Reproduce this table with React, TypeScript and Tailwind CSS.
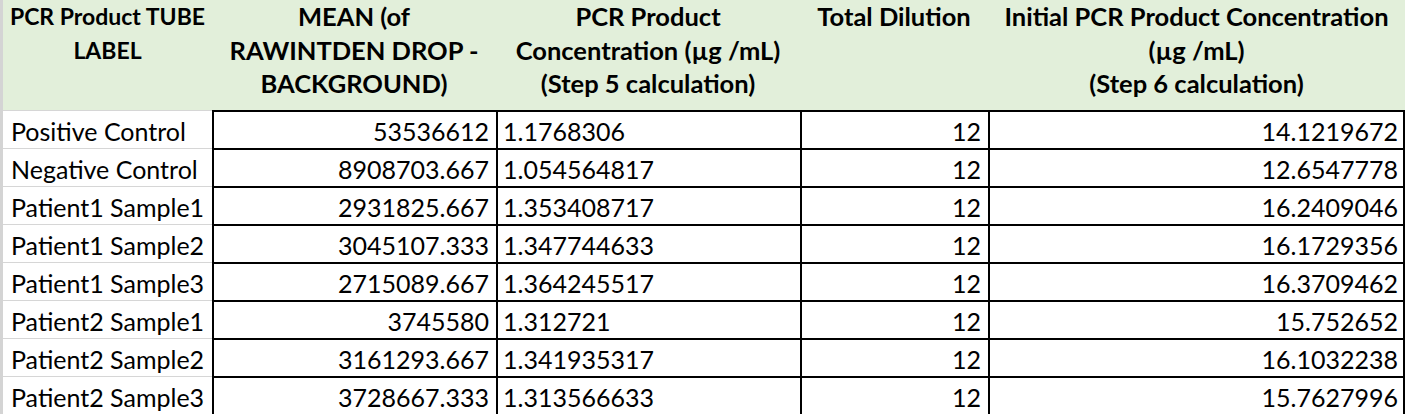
import React from "react";

const rows = [
  ["Positive Control", "53536612", "1.1768306", "12", "14.1219672"],
  ["Negative Control", "8908703.667", "1.054564817", "12", "12.6547778"],
  ["Patient1 Sample1", "2931825.667", "1.353408717", "12", "16.2409046"],
  ["Patient1 Sample2", "3045107.333", "1.347744633", "12", "16.1729356"],
  ["Patient1 Sample3", "2715089.667", "1.364245517", "12", "16.3709462"],
  ["Patient2 Sample1", "3745580", "1.312721", "12", "15.752652"],
  ["Patient2 Sample2", "3161293.667", "1.341935317", "12", "16.1032238"],
  ["Patient2 Sample3", "3728667.333", "1.313566633", "12", "15.7627996"],
];

const headers = [
  ["PCR Product TUBE", "LABEL"],
  ["MEAN (of", "RAWINTDEN DROP -", "BACKGROUND)"],
  ["PCR Product", "Concentration (µg /mL)", "(Step 5 calculation)"],
  ["Total Dilution"],
  ["Initial PCR Product Concentration", "(µg /mL)", "(Step 6 calculation)"],
];

export default function App() {
  return (
    <div className="w-[1410px] h-[414px] overflow-hidden bg-white flex text-black font-['Lato',_'Liberation_Sans',_sans-serif]">
      {/* grid gutter on the left */}
      <div className="w-[3px] h-full bg-[#d4d4d4] shrink-0" />
      <div className="grid grid-cols-[209px_284px_304px_188px_417px] grid-rows-[110px_repeat(8,38px)]">
        {/* header */}
        {headers.map((lines, i) => (
          <div
            key={"h" + i}
            className={
              "bg-[#e2efda] flex flex-col items-center font-bold leading-[33.5px] whitespace-nowrap overflow-hidden " +
              (i === 0 ? "text-[23px]" : "text-[25.5px]")
            }
          >
            {lines.map((l) => (
              <span key={l}>{l}</span>
            ))}
          </div>
        ))}

        {/* data rows */}
        {rows.map((r, ri) => (
          <React.Fragment key={ri}>
            <div className="border-t border-[#d6d6d6] flex items-end pl-[8px] pb-[1px] text-[25px] leading-[32px] whitespace-nowrap overflow-hidden">
              {r[0]}
            </div>
            <div className="border-t-2 border-l-2 border-black flex items-end justify-end pr-[7px] pb-[1px] text-[25px] leading-[32px] whitespace-nowrap">
              {r[1]}
            </div>
            <div className="border-t-2 border-l-2 border-black flex items-end pl-[5px] pb-[1px] text-[25px] leading-[32px] whitespace-nowrap">
              {r[2]}
            </div>
            <div className="border-t-2 border-l-2 border-black flex items-end justify-end pr-[7px] pb-[1px] text-[25px] leading-[32px] whitespace-nowrap">
              {r[3]}
            </div>
            <div className="border-t-2 border-l-2 border-r-2 border-black flex items-end justify-end pr-[5px] pb-[1px] text-[25px] leading-[32px] whitespace-nowrap">
              {r[4]}
            </div>
          </React.Fragment>
        ))}
      </div>
    </div>
  );
}
